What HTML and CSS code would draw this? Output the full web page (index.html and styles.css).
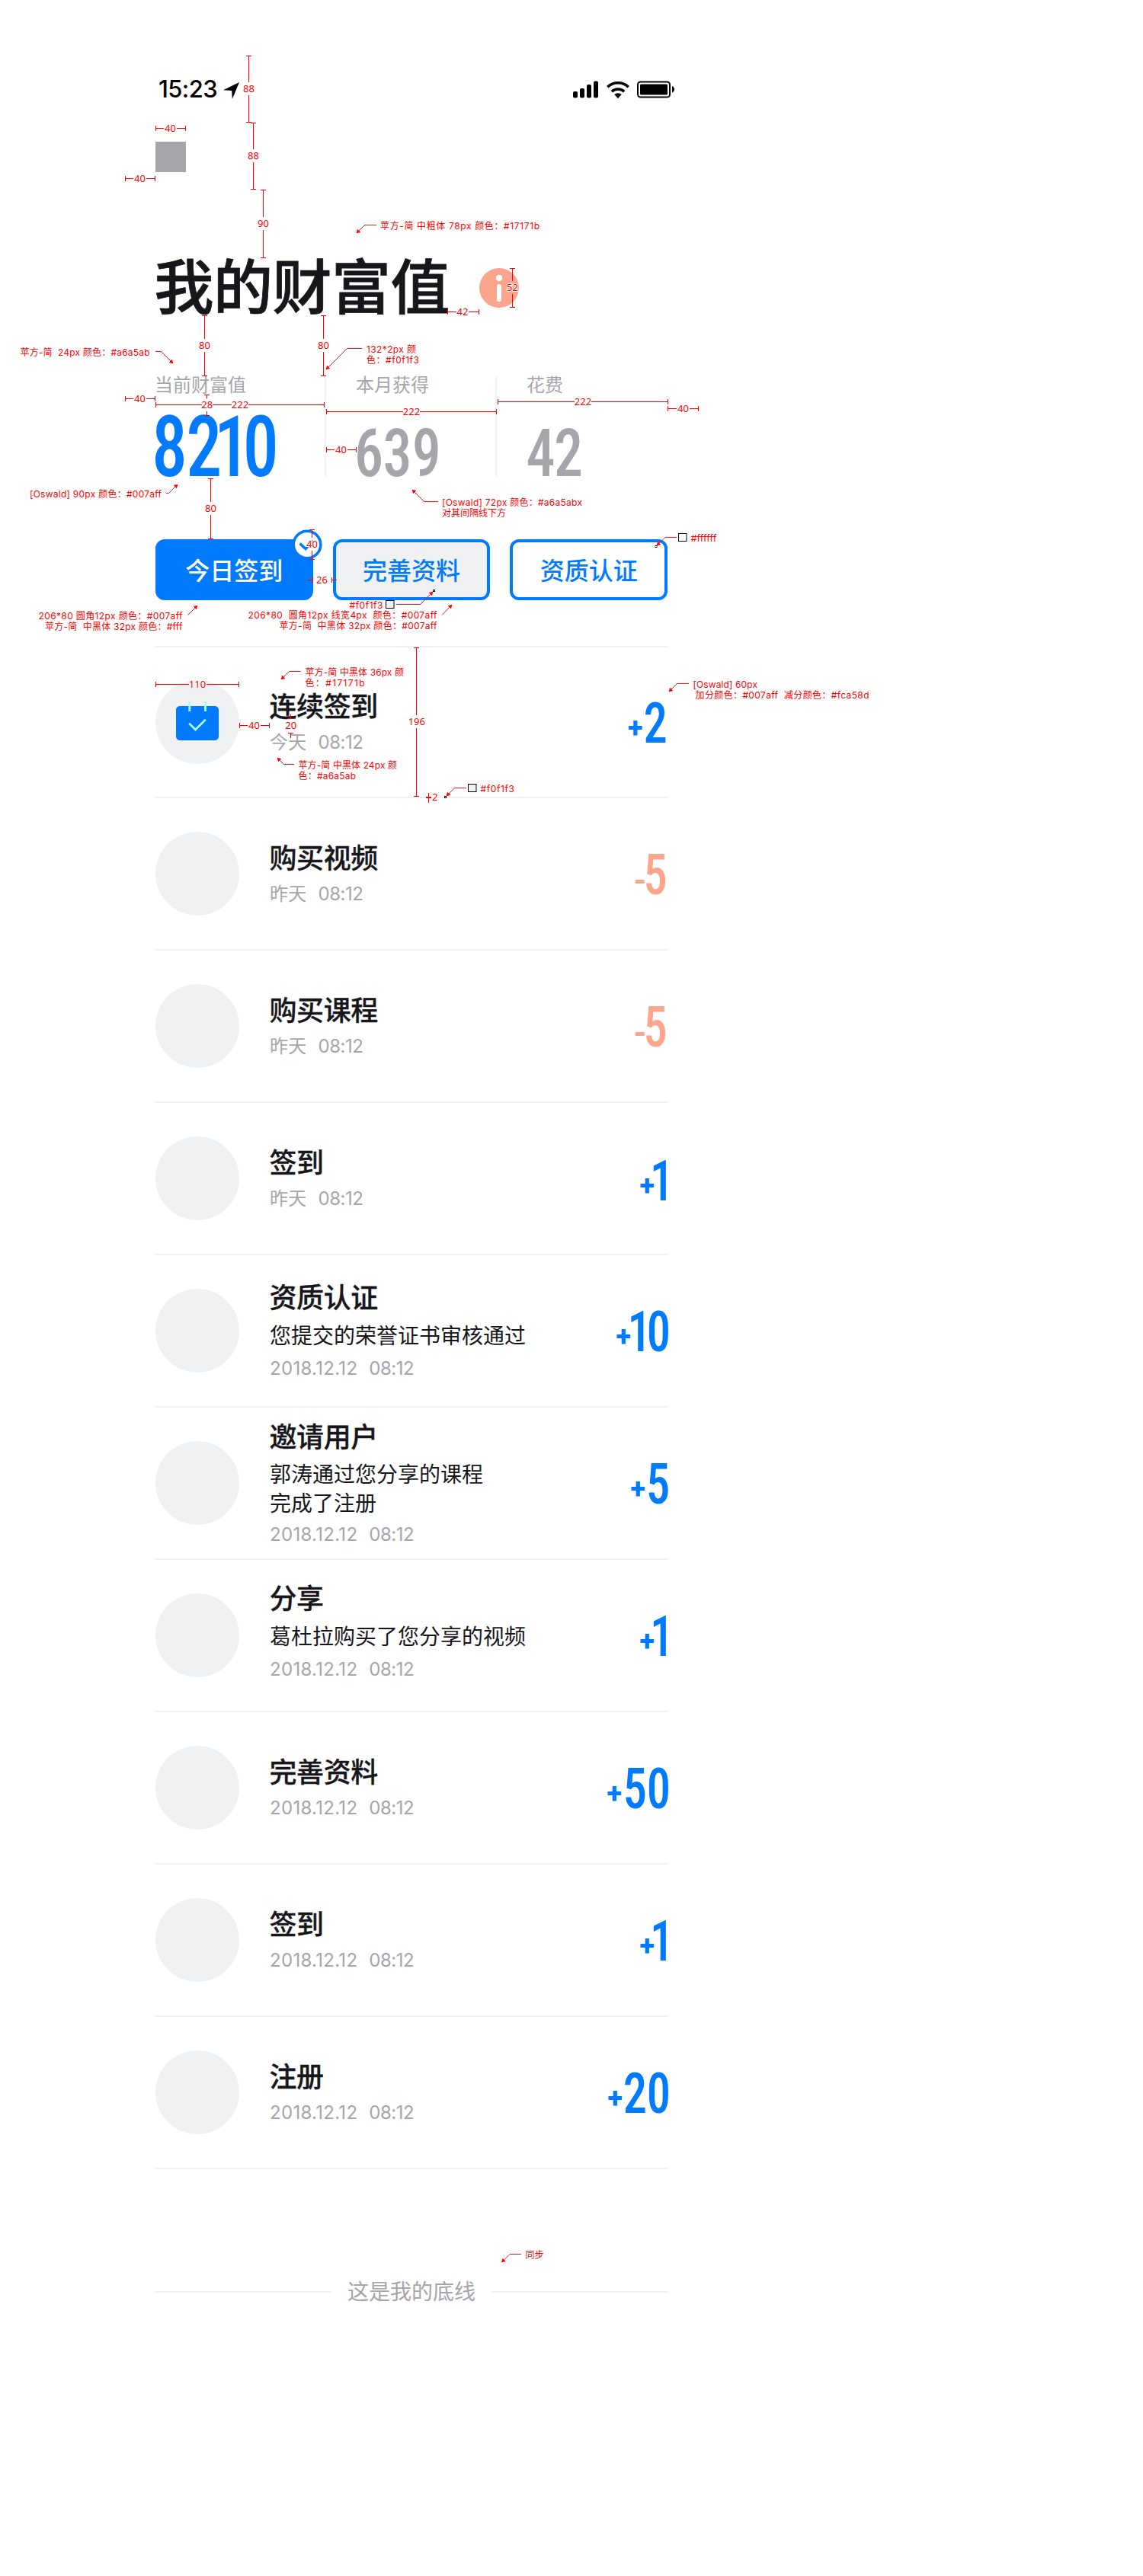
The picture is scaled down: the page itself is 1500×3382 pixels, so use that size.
FILE: index.html
```html
<!DOCTYPE html>
<html lang="zh-CN">
<head>
<meta charset="utf-8">
<title>我的财富值</title>
<link rel="stylesheet" href="styles.css">
</head>
<body>
<main class="screen">
  <header class="status">
    <span class="clock">15:23</span>
    <svg class="locate" width="21" height="22" viewBox="0 0 21 22"><path d="M21 0 0 10.3l11.2.8.6 10.9z"/></svg>
    <svg class="signals" width="134" height="24" viewBox="0 0 134 24">
      <rect x="0" y="14" width="6" height="8.5" rx="2"/><rect x="9" y="10" width="6" height="12.5" rx="2"/><rect x="18" y="5" width="6" height="17.5" rx="2"/><rect x="27" y="0.5" width="6" height="22" rx="2"/>
      <path class="arc" d="M45.3 8.2a20 20 0 0 1 27.4 0M50.8 14.3a12 12 0 0 1 16.400 0"/>
      <path d="M59 23.300l-4.700-5.200a7 7 0 0 1 9.400 0z"/>
      <rect class="shell" x="85" y="1.500" width="42" height="20" rx="3.500"/><rect x="88" y="4.500" width="36" height="14" rx="1.500"/>
      <path d="M130 7c4 1.500 4 7 0 8.500z"/>
    </svg>
  </header>
  <div class="nav"><span class="back"></span></div>
  <div class="heading">
    <h1>我的财富值</h1>
    <svg class="info" width="52" height="52" viewBox="0 0 52 52"><circle cx="26" cy="26" r="26" fill="#fca58d"/><circle cx="26" cy="13" r="4.200" fill="#fff"/><rect x="23" y="21" width="6" height="23" rx="3" fill="#fff"/></svg>
  </div>
  <section class="stats">
    <div class="stat main">
      <span class="label">当前财富值</span>
      <svg class="figure" width="160" height="82"><text class="num n90" transform="translate(0 81) scale(.85 1)" x="-6 47.500 90.500 135">8210</text></svg>
    </div>
    <div class="stat">
      <span class="label">本月获得</span>
      <svg class="figure" width="110" height="66"><text class="num n72" transform="translate(0 65) scale(.87 1)" x="-3.600 39.800 83.500">639</text></svg>
    </div>
    <div class="stat">
      <span class="label">花费</span>
      <svg class="figure" width="80" height="66"><text class="num n72" transform="translate(0 65) scale(.87 1)" x="-1.800 40.300">42</text></svg>
    </div>
  </section>
  <nav class="actions">
    <button class="btn primary">今日签到
      <svg class="done" width="40" height="40" viewBox="0 0 40 40"><circle cx="20" cy="20" r="17.800" fill="#fff" stroke="#007aff" stroke-width="3.600"/><path d="M10.500 18.500l7.500 7 9.500-10.500" fill="none" stroke="#007aff" stroke-width="3.500"/></svg>
    </button>
    <button class="btn tinted">完善资料</button>
    <button class="btn">资质认证</button>
  </nav>
  <ul class="records">
    <li class="first">
      <span class="avatar"><svg width="56" height="51" viewBox="0 0 56 51"><rect y="6" width="56" height="45" rx="5" fill="#007aff"/><path d="M17.800 0v13M38.500 0v13" stroke="#a5fbff" stroke-width="3"/><path d="M18 29.500l7.500 7.500L38 24.500" fill="none" stroke="#a5fbff" stroke-width="2.800" stroke-linecap="round"/></svg></span>
      <div class="info-col"><h2>连续签到</h2><p class="time"><span>今天</span><span>08:12</span></p></div>
      <svg class="amount plus" width="100" height="54"><text class="sign" x="48" y="46">+</text><text class="num n60" transform="translate(68.500 53) scale(.85 1)">2</text></svg>
    </li>
    <li>
      <span class="avatar"></span>
      <div class="info-col"><h2>购买视频</h2><p class="time"><span>昨天</span><span>08:12</span></p></div>
      <svg class="amount minus" width="100" height="54"><text class="sign dash" x="55" y="50">-</text><text class="num n60" transform="translate(68.500 53) scale(.85 1)">5</text></svg>
    </li>
    <li>
      <span class="avatar"></span>
      <div class="info-col"><h2>购买课程</h2><p class="time"><span>昨天</span><span>08:12</span></p></div>
      <svg class="amount minus" width="100" height="54"><text class="sign dash" x="55" y="50">-</text><text class="num n60" transform="translate(68.500 53) scale(.85 1)">5</text></svg>
    </li>
    <li>
      <span class="avatar"></span>
      <div class="info-col"><h2>签到</h2><p class="time"><span>昨天</span><span>08:12</span></p></div>
      <svg class="amount plus low" width="100" height="54"><text class="sign" x="63.500" y="46">+</text><text class="num n60" transform="translate(77 53) scale(.85 1)">1</text></svg>
    </li>
    <li>
      <span class="avatar"></span>
      <div class="info-col"><h2>资质认证</h2><p class="desc">您提交的荣誉证书审核通过</p><p class="time"><span>2018.12.12</span><span>08:12</span></p></div>
      <svg class="amount plus" width="100" height="54"><text class="sign" x="32.500" y="46">+</text><text class="num n60" transform="translate(0 53) scale(.85 1)" x="56 85.500">10</text></svg>
    </li>
    <li class="long">
      <span class="avatar"></span>
      <div class="info-col"><h2>邀请用户</h2><p class="desc">郭涛通过您分享的课程<br>完成了注册</p><p class="time"><span>2018.12.12</span><span>08:12</span></p></div>
      <svg class="amount plus" width="100" height="54"><text class="sign" x="51.500" y="46">+</text><text class="num n60" transform="translate(72 53) scale(.85 1)">5</text></svg>
    </li>
    <li class="raised">
      <span class="avatar"></span>
      <div class="info-col"><h2>分享</h2><p class="desc">葛杜拉购买了您分享的视频</p><p class="time"><span>2018.12.12</span><span>08:12</span></p></div>
      <svg class="amount plus" width="100" height="54"><text class="sign" x="63.500" y="46">+</text><text class="num n60" transform="translate(77 53) scale(.85 1)">1</text></svg>
    </li>
    <li>
      <span class="avatar"></span>
      <div class="info-col"><h2>完善资料</h2><p class="time"><span>2018.12.12</span><span>08:12</span></p></div>
      <svg class="amount plus" width="100" height="54"><text class="sign" x="20.500" y="46">+</text><text class="num n60" transform="translate(0 53) scale(.85 1)" x="49 85.500">50</text></svg>
    </li>
    <li>
      <span class="avatar"></span>
      <div class="info-col"><h2>签到</h2><p class="time"><span>2018.12.12</span><span>08:12</span></p></div>
      <svg class="amount plus" width="100" height="54"><text class="sign" x="63.500" y="46">+</text><text class="num n60" transform="translate(77 53) scale(.85 1)">1</text></svg>
    </li>
    <li>
      <span class="avatar"></span>
      <div class="info-col"><h2>注册</h2><p class="time"><span>2018.12.12</span><span>08:12</span></p></div>
      <svg class="amount plus" width="100" height="54"><text class="sign" x="21.500" y="46">+</text><text class="num n60" transform="translate(0 53) scale(.85 1)" x="49 85.500">20</text></svg>
    </li>
  </ul>
  <footer class="end">这是我的底线</footer>
</main>

<svg class="spec" width="1500" height="3382" viewBox="0 0 1500 3382">
  <defs><marker id="tip" markerUnits="userSpaceOnUse" markerWidth="8" markerHeight="8" refX="5" refY="3" orient="auto"><path d="M5.500 3 .5 0v6z" fill="#f00"/></marker></defs>
  <g class="rule">
    <path d="M323 73.500h7M326.500 73.500V108M326.500 125v35.500M323 160.500h7"/>
    <path d="M329 161.500h7M332.500 161.500V196M332.500 213v35.500M329 248.500h7"/>
    <path d="M342 249.500h7M345.500 249.500V285M345.500 302v36.500M342 338.500h7"/>
    <path d="M265 414.500h7M268.500 414.500V445M268.500 462v31.500M265 493.500h7"/>
    <path d="M421 414.500h7M424.500 414.500V445M424.500 462v31.500M421 493.500h7"/>
    <path d="M268 518.500h7M271.500 518.500v5M271.500 540v5.500M268 545.500h7"/>
    <path d="M273 628.500h7M276.500 628.500V659M276.500 676v31.500M273 707.500h7"/>
    <path d="M406 695.500h7M409.500 695.500V706M409.500 723v11.500M406 734.500h7"/>
    <path d="M669 352.500h7M672.500 352.500V369M672.500 386v17.500M669 403.500h7"/>
    <path d="M543 850.500h7M546.500 850.500V939M546.500 956v89.500M543 1045.500h7"/>
    <path d="M381.500 938v5M378 943.500h7M378 962.500h7M381.500 962v7"/>
    <path d="M562.500 1041v13"/><path d="M559 1047h7" stroke-width="2"/>
    <path d="M204.500 165v7M204.500 168.500H215M232 168.500h11.500M243.500 165v7"/>
    <path d="M164.500 231v7M164.500 234.500H175M192 234.500h11.500M203.500 231v7"/>
    <path d="M587.500 406v7M587.500 409.500H599M615 409.500h13.500M628.500 406v7"/>
    <path d="M164.500 520v7M164.500 523.500H175M192 523.500h11.500M203.500 520v7"/>
    <path d="M204.500 528v7M204.500 531.500H265M279 531.500h25M326 531.500h99.500M425.500 528v7"/>
    <path d="M428.500 537v7M428.500 540.500H529M551 540.500h100M651.500 537v7"/>
    <path d="M653.500 524v7M653.500 527.500H754M776 527.500h100M876.500 524v7"/>
    <path d="M876.500 533v7M876.500 536.500H888M905 536.500h11.500M916.500 533v7"/>
    <path d="M428.500 587v7M428.500 590.500H439M456 590.500h11.500M467.500 587v7"/>
    <path d="M404 761.500h6M410.500 758v7M435.500 758v7M436 761.500h6"/>
    <path d="M204.500 895v7M204.500 898.500H248M271 898.500h42.500M313.500 895v7"/>
    <path d="M314.500 949v7M314.500 952.500H325M342 952.500h11.500M353.500 949v7"/>
  </g>
  <g class="size">
    <text x="326.500" y="121">88</text><text x="332.500" y="209">88</text><text x="345.500" y="298">90</text>
    <text x="268.500" y="458">80</text><text x="424.500" y="458">80</text><text x="271.700" y="536">28</text>
    <text x="276.500" y="672">80</text><text x="409.500" y="719">40</text><text x="672.500" y="382">52</text>
    <text x="546.800" y="952">196</text><text x="381.700" y="957">20</text><text x="570.700" y="1051">2</text>
    <text x="223.500" y="173">40</text><text x="183.500" y="239">40</text><text x="607" y="414">42</text>
    <text x="183.500" y="528">40</text><text x="315" y="536">222</text><text x="540" y="545">222</text>
    <text x="765" y="532">222</text><text x="896.500" y="541">40</text><text x="447.500" y="595">40</text>
    <text x="422.500" y="766">26</text><text x="259" y="903">110</text><text x="333.500" y="957">40</text>
  </g>
  <g class="leader">
    <path d="M494 295.500h-15.500L468 306"/>
    <path d="M204 461.500h7.500L227 477"/>
    <path d="M475 457.500h-19.500L428 485"/>
    <path d="M218 647.500h3.500L233 636"/>
    <path d="M575 658.500h-18.500L541 643"/>
    <path d="M246.500 807.500 259 795"/>
    <path d="M580 807.500 593 794"/>
    <path d="M519.500 793.500h32L568 777"/>
    <path d="M888 705.500h-15L862 716"/>
    <path d="M394.500 881.500h-15L369 892"/>
    <path d="M386 1003.500h-13.500L364 995"/>
    <path d="M904 897.500h-15.500L878 908"/>
    <path d="M612 1034.500h-15.500L586 1045"/>
    <path d="M684 2959.500h-15L658.500 2970"/>
  </g>
  <g class="swatch">
    <rect x="506.500" y="788.500" width="10.500" height="10" fill="#f0f1f3"/><rect x="890.500" y="700.500" width="10.500" height="10" fill="#fff"/><rect x="614.500" y="1029.500" width="10.500" height="10" fill="#f0f1f3"/>
    <rect x="568.500" y="774.500" width="2" height="2" fill="#fff"/><rect x="860" y="716.500" width="2" height="2" fill="#fff"/><rect x="583.500" y="1045.500" width="2" height="2" fill="#fff"/>
  </g>
  <g class="note">
    <text x="499" y="301" textLength="209">苹方-简 中粗体 78px 颜色：#17171b</text>
    <text x="26.500" y="467" textLength="170">苹方-简&#160; 24px 颜色：#a6a5ab</text>
    <text x="481" y="463" textLength="65">132*2px 颜</text><text x="481" y="477" textLength="69">色：#f0f1f3</text>
    <text x="39" y="653" textLength="173">[Oswald] 90px 颜色：#007aff</text>
    <text x="580" y="664" textLength="184">[Oswald] 72px 颜色：#a6a5abx</text><text x="580" y="678">对其间隔线下方</text>
    <text x="50.500" y="813" textLength="189">206*80 圆角12px 颜色：#007aff</text><text x="59" y="827" textLength="180.500">苹方-简&#160; 中黑体 32px 颜色：#fff</text>
    <text x="325.500" y="812" textLength="248">206*80&#160; 圆角12px 线宽4px&#160; 颜色：#007aff</text><text x="366.500" y="826" textLength="207">苹方-简&#160; 中黑体 32px 颜色：#007aff</text>
    <text x="458.500" y="799" textLength="44">#f0f1f3</text><text x="906.500" y="710.500" textLength="34" lengthAdjust="spacingAndGlyphs">#ffffff</text>
    <text x="400.500" y="887" textLength="129.500">苹方-简 中黑体 36px 颜</text><text x="400.500" y="901" textLength="78">色：#17171b</text>
    <text x="391.500" y="1009" textLength="129.500">苹方-简 中黑体 24px 颜</text><text x="391.500" y="1023" textLength="75.500">色：#a6a5ab</text>
    <text x="909.500" y="903" textLength="84.500">[Oswald] 60px</text><text x="912.500" y="917" textLength="228">加分颜色：#007aff&#160; 减分颜色：#fca58d</text>
    <text x="630.500" y="1040" textLength="44.500">#f0f1f3</text><text x="689.500" y="2965">同步</text>
  </g>
</svg>
</body>
</html>
```
FILE: styles.css
```css
* { box-sizing: border-box; margin: 0; padding: 0; }
body {
  position: relative;
  width: 1500px;
  height: 3382px;
  background: #fff;
  color: #17171b;
  font-family: Inter, "Noto Sans CJK SC", sans-serif;
}
svg { display: block; overflow: visible; }
.screen { width: 672px; margin-left: 204px; padding-top: 73px; }

.status { display: flex; align-items: center; height: 88px; color: #000; }
.clock { flex: none; width: 88.5px; padding-left: 4px; font-size: 31px; font-weight: 500; line-height: 40px; letter-spacing: -.6px; white-space: nowrap; }
.locate { flex: none; margin-top: 3px; }
.signals { flex: none; margin: 2px 0 0 438.5px; }
.arc { fill: none; stroke: #000; stroke-width: 3.6; }
.shell { fill: none; stroke: #000; stroke-width: 2; }

.nav { display: flex; align-items: center; height: 88px; padding-top: 2px; }
.back { width: 40px; height: 40px; background: #a6a5ab; }

.heading { display: flex; align-items: center; height: 80px; margin-top: 90px; }
h1 { width: 425px; margin: -2px 0 0 -1.5px; font-size: 78px; font-weight: 500; line-height: 80px; letter-spacing: -.5px; white-space: nowrap; -webkit-text-stroke: .8px #17171b; }
.info { margin: -2px 0 0 1.5px; }

.stats { display: flex; height: 132px; margin-top: 75px; color: #a6a5ab; }
.stat { display: flex; flex-direction: column; justify-content: space-between; width: 224px; padding-left: 40px; border-left: 2px solid #f0f1f3; }
.stat.main { width: 222px; padding-left: 0; border-left: 0; }
.label { margin-left: -1px; font-size: 24px; line-height: 24px; white-space: nowrap; }
.num { font-family: Roboto, sans-serif; font-stretch: 75%; font-weight: 500; fill: #a6a5ab; }
.main .num, .plus text { fill: #007aff; }
.minus text { fill: #fca58d; }
.n90 { font-size: 110.5px; }
.n72 { font-size: 87.5px; }
.n60 { font-size: 73.5px; }

.actions { display: flex; gap: 26px; margin-top: 82px; }
.btn { position: relative; flex: 1; height: 80px; padding-bottom: 2px; border: 4px solid #007aff; border-radius: 12px; background: #fff; color: #007aff; font: 500 32px/70px "Noto Sans CJK SC", sans-serif; text-align: center; }
.primary { background: #007aff; color: #fff; }
.tinted { background: #f0f1f3; }
.done { position: absolute; top: -17px; right: -16px; }

.records { list-style: none; margin-top: 60px; border-top: 2px solid #f0f1f3; }
.records li { display: flex; align-items: center; height: 200px; border-bottom: 2px solid #f0f1f3; }
.records .first { height: 198px; }
.avatar { display: flex; justify-content: center; flex: none; width: 110px; height: 110px; margin-right: 40px; padding-top: 28px; border-radius: 50%; background: #f0f1f3; }
.info-col { flex: 1; margin-top: 1px; }
h2 { margin-left: -.5px; font-size: 36px; font-weight: 500; line-height: 50px; letter-spacing: -.4px; -webkit-text-stroke: .3px #17171b; }
.desc { margin: 6px 0 4px; font-size: 28px; line-height: 38px; white-space: nowrap; }
.time { display: flex; gap: 15px; margin-top: 2px; color: #a6a5ab; font-size: 24px; line-height: 39px; letter-spacing: -.5px; }
.time span:first-child { letter-spacing: .3px; }
.long .desc { margin: 5px 0 2px; }
.raised .info-col { margin-top: -10px; }
.amount { flex: none; margin-top: 1px; }
.low { margin-top: 5px; }
.sign { font: 800 36px Roboto, sans-serif; }
.dash { font-size: 42px; }

.end { display: flex; align-items: center; gap: 21px; margin-top: 141px; font-size: 28px; line-height: 40px; color: #a6a5ab; white-space: nowrap; }
.end::before, .end::after { content: ""; flex: 1; height: 2px; background: #f0f1f3; }

/* Redline annotations over the screen */
.spec { position: absolute; left: 0; top: 0; pointer-events: none; }
.rule path, .leader path { fill: none; stroke: #f00; }
.leader path { stroke-width: .9; marker-end: url(#tip); }
.size text { font: 13px "Noto Sans", sans-serif; text-anchor: middle; fill: #f00; stroke: #fff; stroke-width: 2px; paint-order: stroke; }
.note text { font: 12px Inter, "Noto Sans CJK SC", sans-serif; font-feature-settings: "calt" 0; fill: #f00; }
.swatch rect { stroke: #000; }
```
